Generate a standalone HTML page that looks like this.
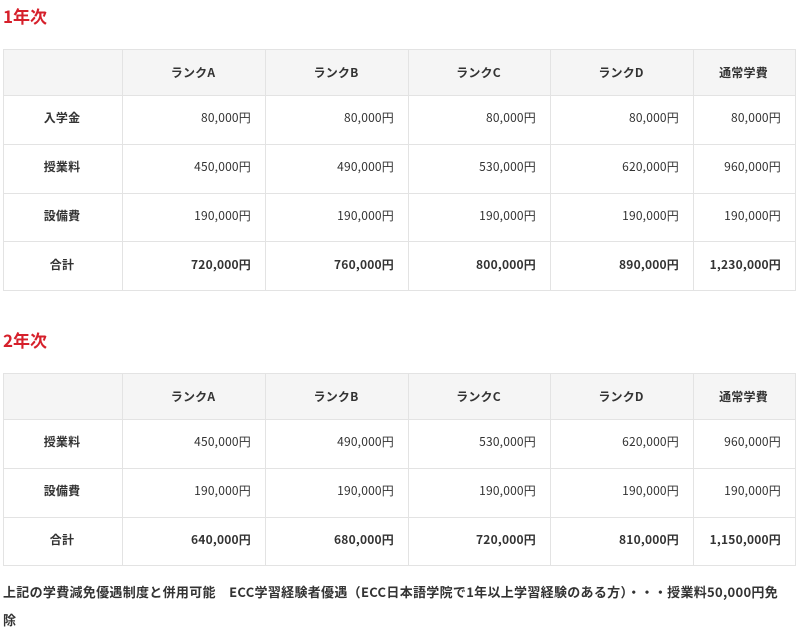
<!DOCTYPE html>
<html><head><meta charset="utf-8"><style>
body{margin:0;width:796px;height:632px;overflow:hidden;background:#fff;font-family:"Noto Sans CJK JP",sans-serif;color:#333;}
h2{position:absolute;left:3px;margin:0;font-size:17px;font-weight:bold;color:#d6202b;line-height:20px;}
table{position:absolute;left:3px;border-collapse:collapse;table-layout:fixed;font-size:12px;letter-spacing:0.2px;}
td,th{border:1px solid #e3e3e3;padding:0 14px 0 12px;line-height:16px;}
th{background:#f5f5f5;height:45px;font-weight:bold;text-align:center;color:#333;}
td{height:44.75px;text-align:right;color:#333;padding-bottom:3px;}
td:first-child{text-align:center;font-weight:bold;}
tr.t td{font-weight:bold;}
.note{position:absolute;left:3px;top:578px;width:780px;font-size:13px;letter-spacing:0.3px;font-weight:bold;line-height:28px;color:#333;}
</style></head><body>
<h2 style="top:6px">1年次</h2>
<table style="top:49px">
<colgroup><col style="width:119px"><col style="width:143px"><col style="width:143px"><col style="width:142px"><col style="width:143px"><col style="width:102px"></colgroup>
<tr><th></th><th>ランクA</th><th>ランクB</th><th>ランクC</th><th>ランクD</th><th>通常学費</th></tr>
<tr><td>入学金</td><td>80,000円</td><td>80,000円</td><td>80,000円</td><td>80,000円</td><td>80,000円</td></tr>
<tr><td>授業料</td><td>450,000円</td><td>490,000円</td><td>530,000円</td><td>620,000円</td><td>960,000円</td></tr>
<tr><td>設備費</td><td>190,000円</td><td>190,000円</td><td>190,000円</td><td>190,000円</td><td>190,000円</td></tr>
<tr class="t"><td>合計</td><td>720,000円</td><td>760,000円</td><td>800,000円</td><td>890,000円</td><td>1,230,000円</td></tr>
</table>
<h2 style="top:330px">2年次</h2>
<table style="top:373px">
<colgroup><col style="width:119px"><col style="width:143px"><col style="width:143px"><col style="width:142px"><col style="width:143px"><col style="width:102px"></colgroup>
<tr><th></th><th>ランクA</th><th>ランクB</th><th>ランクC</th><th>ランクD</th><th>通常学費</th></tr>
<tr><td>授業料</td><td>450,000円</td><td>490,000円</td><td>530,000円</td><td>620,000円</td><td>960,000円</td></tr>
<tr><td>設備費</td><td>190,000円</td><td>190,000円</td><td>190,000円</td><td>190,000円</td><td>190,000円</td></tr>
<tr class="t"><td>合計</td><td>640,000円</td><td>680,000円</td><td>720,000円</td><td>810,000円</td><td>1,150,000円</td></tr>
</table>
<div class="note">上記の学費減免優遇制度と併用可能　ECC学習経験者優遇（ECC日本語学院で1年以上学習経験のある方）・・・授業料50,000円免除</div>
</body></html>
